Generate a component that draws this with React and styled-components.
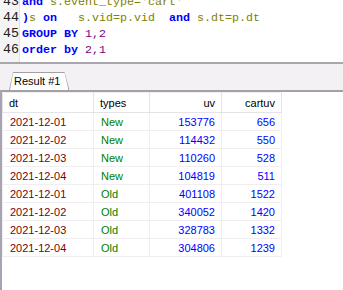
import React from 'react'
import styled, { createGlobalStyle } from "styled-components";

const GlobalStyle = createGlobalStyle`
  html, body {
    margin: 0;
    padding: 0;
    background: #ffffff;
    overflow: hidden;
  }
`;

const Page = styled.div`
  width: 343px;
  height: 290px;
  display: flex;
  flex-direction: column;
  overflow: hidden;
`;

const Editor = styled.div`
  height: 62px;
  display: flex;
  overflow: hidden;
  border-bottom: 2px solid #a9a7ad;
  background: #ffffff;
`;

const Gutter = styled.div`
  width: 19px;
  flex: none;
  background: #f4f4f4;
  border-right: 1px solid #e2e2e2;
`;

const Lines = styled.div`
  margin-top: -6px;
  padding-left: 2px;
`;

const Num = styled.div`
  height: 16px;
  line-height: 16px;
  font-family: "Liberation Mono", monospace;
  font-size: 13.3px;
  color: #202020;
  padding-left: 1px;
`;

const Code = styled.div`
  flex: 1;
  margin-top: -6px;
  padding-left: 2px;
`;

const CodeLine = styled.div`
  height: 16px;
  line-height: 16px;
  white-space: pre;
  font-family: "Liberation Mono", monospace;
  font-size: 11.67px;
`;

const Tok = styled.span`
  color: ${p => p.$c === "kw" ? "#0000ff" : p.$c === "num" ? "#800080" : "#808000"};
  font-weight: ${p => p.$c === "kw" ? 700 : 400};
`;

const TabStrip = styled.div`
  height: 26px;
  background: #f4f1f5;
  padding: 8px 0 0 9px;
  box-sizing: border-box;
  display: flex;
  align-items: flex-end;
`;

const TabOuter = styled.div`
  background: #a3a1a6;
  padding: 1px 1px 0 1px;
  clip-path: polygon(4px 0, calc(100% - 5px) 0, 100% 100%, 0 100%);
`;

const TabInner = styled.div`
  background: #ffffff;
  height: 17px;
  padding: 0 8px 0 4px;
  clip-path: polygon(3px 0, calc(100% - 4px) 0, 100% 100%, 0 100%);
  font-family: "Liberation Sans", Arial, sans-serif;
  font-size: 11px;
  line-height: 17px;
  color: #000;
`;

const Grid = styled.div`
  flex: 1;
  border-top: 2px solid #a3a1a6;
  border-left: 2px solid #a6a4ae;
  background: #ffffff;
`;

const Table = styled.table`
  border-collapse: collapse;
  table-layout: fixed;
  font-family: "Liberation Sans", Arial, sans-serif;
  font-size: 11px;
`;

const Head = styled.th`
  width: ${p => p.$w}px;
  height: 20px;
  padding: 1px ${p => p.$right ? "6px" : "0"} 0 ${p => p.$right ? "0" : "6px"};
  border: 1px solid #e6e3e8;
  border-top-color: #f2f0f3;
  text-align: ${p => p.$right ? "right" : "left"};
  font-weight: 400;
  color: #000;
  box-sizing: border-box;
`;

const Cell = styled.td`
  height: 18px;
  padding: 0 ${p => p.$right ? "6px" : "0"} 0 ${p => p.$right ? "0" : "7px"};
  border: 1px solid #f1eef2;
  text-align: ${p => p.$right ? "right" : "left"};
  color: ${p => p.$color};
  box-sizing: border-box;
`;

const rows = [
  ["2021-12-01", "New", 153776, 656],
  ["2021-12-02", "New", 114432, 550],
  ["2021-12-03", "New", 110260, 528],
  ["2021-12-04", "New", 104819, 511],
  ["2021-12-01", "Old", 401108, 1522],
  ["2021-12-02", "Old", 340052, 1420],
  ["2021-12-03", "Old", 328783, 1332],
  ["2021-12-04", "Old", 304806, 1239],
];

export default function App() {
  return (
    <Page>
      <GlobalStyle />
      <Editor>
        <Gutter>
          <Lines>
            <Num>43</Num>
            <Num>44</Num>
            <Num>45</Num>
            <Num>46</Num>
          </Lines>
        </Gutter>
        <Code>
          <CodeLine><Tok $c="kw">and</Tok> <Tok>s.event_type='cart'</Tok></CodeLine>
          <CodeLine><Tok $c="kw">)</Tok><Tok>s</Tok> <Tok $c="kw">on</Tok>   <Tok>s.vid=p.vid</Tok>  <Tok $c="kw">and</Tok> <Tok>s.dt=p.dt</Tok></CodeLine>
          <CodeLine><Tok $c="kw">GROUP BY</Tok> <Tok $c="num">1,2</Tok></CodeLine>
          <CodeLine><Tok $c="kw">order by</Tok> <Tok $c="num">2,1</Tok></CodeLine>
        </Code>
      </Editor>
      <TabStrip>
        <TabOuter>
          <TabInner>Result #1</TabInner>
        </TabOuter>
      </TabStrip>
      <Grid>
        <Table>
          <thead>
            <tr>
              <Head $w={91}>dt</Head>
              <Head $w={56}>types</Head>
              <Head $w={72} $right>uv</Head>
              <Head $w={60} $right>cartuv</Head>
            </tr>
          </thead>
          <tbody>
            {rows.map((r, i) => (
              <tr key={i}>
                <Cell $color="#800000">{r[0]}</Cell>
                <Cell $color="#008000">{r[1]}</Cell>
                <Cell $color="#0000ff" $right>{r[2]}</Cell>
                <Cell $color="#0000ff" $right>{r[3]}</Cell>
              </tr>
            ))}
          </tbody>
        </Table>
      </Grid>
    </Page>
  )
}
